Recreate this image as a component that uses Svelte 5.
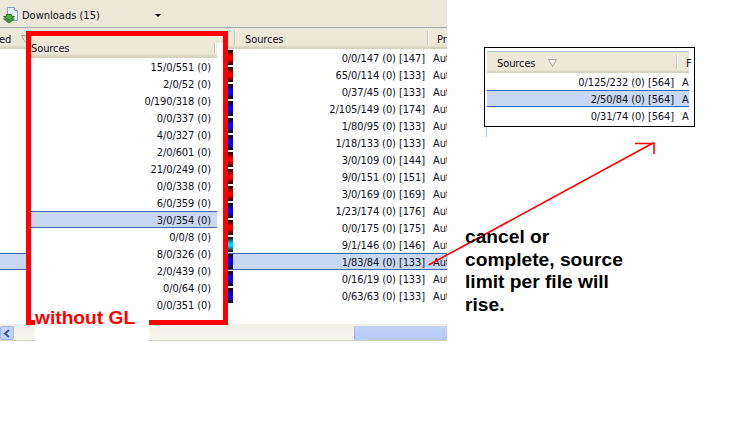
<script>
  const main = [
    ['0/0/147 (0) [147]', 'red'], ['65/0/114 (0) [133]', 'red'], ['0/37/45 (0) [133]', 'blue'],
    ['2/105/149 (0) [174]', 'blue'], ['1/80/95 (0) [133]', 'blue'], ['1/18/133 (0) [133]', 'blue'],
    ['3/0/109 (0) [144]', 'red'], ['9/0/151 (0) [151]', 'red'], ['3/0/169 (0) [169]', 'red'],
    ['1/23/174 (0) [176]', 'blue'], ['0/0/175 (0) [175]', 'red'], ['9/1/146 (0) [146]', 'cyan'],
    ['1/83/84 (0) [133]', 'blue'], ['0/16/19 (0) [133]', 'blue'], ['0/63/63 (0) [133]', 'blue']
  ];
  const left = ['15/0/551 (0)', '2/0/52 (0)', '0/190/318 (0)', '0/0/337 (0)', '4/0/327 (0)', '2/0/601 (0)',
    '21/0/249 (0)', '0/0/338 (0)', '6/0/359 (0)', '3/0/354 (0)', '0/0/8 (0)', '8/0/326 (0)', '2/0/439 (0)',
    '0/0/64 (0)', '0/0/351 (0)'];
  const inset = ['0/125/232 (0) [564]', '2/50/84 (0) [564]', '0/31/74 (0) [564]'];
</script>

<div class="stage">
  <div class="window">
    <div class="toolbar">
      <svg class="dl" width="17" height="17" viewBox="0 0 17 17">
        <path d="M4.500.5h7l3 3v10h-10z" fill="#e6eef8" stroke="#8ea3c2" />
        <path d="M11.500.5v3h3" fill="#fff" stroke="#8ea3c2" />
        <path d="M3.500 7.500h5v2h3l-5.500 3.500L.5 9.500h3z" fill="#53b03f" stroke="#2f7426" />
        <path d="M.5 12l5.500 4 5.500-4-2-.5L6 14 2.500 11.500z" fill="#3f9a30" stroke="#2f7426" stroke-width=".7" />
      </svg>
      <span class="dltext">Downloads (15)</span>
      <span class="caret"></span>
    </div>
    <div class="head">
      <span class="h-ed">ed</span>
      <svg class="sort" width="9" height="8" viewBox="0 0 9 8"><path d="M.5.5h8L4.500 7.500z" fill="#f2f0e6" stroke="#aca899" /></svg>
      <span class="sep s1"></span>
      <span class="h-progress">Progress</span>
      <span class="sep s2"></span>
      <span class="h-sources">Sources</span>
      <span class="sep s3"></span>
      <span class="h-pr">Pr</span>
    </div>
    <div class="rows">
      {#each main as [text, color], i}
        <div class="row" class:sel={i === 12}>
          <span class="bar {color}"></span>
          <span class="val">{text}</span>
          <span class="au">Aut</span>
        </div>
      {/each}
    </div>
    <div class="hscroll">
      <span class="btn"><svg width="8" height="9" viewBox="0 0 8 9"><path d="M6 1L2 4.500 6 8" fill="none" stroke="#3d5a9e" stroke-width="2" /></svg></span>
      <span class="thumb"></span>
    </div>
  </div>

  <div class="frame">
    <div class="patch-head"><span>Sources</span><i></i></div>
    <div class="patch-rows">
      {#each left as text, i}
        <div class="prow" class:sel={i === 9}>{text}</div>
      {/each}
    </div>
  </div>
  <div class="label">without GL</div>

  <div class="inset">
    <div class="inset-head"><span>Sources</span>
      <svg width="9" height="8" viewBox="0 0 9 8"><path d="M.5.5h8L4.500 7.500z" fill="#f2f0e6" stroke="#aca899" /></svg>
      <i></i><span class="f">F</span>
    </div>
    {#each inset as text, i}
      <div class="irow" class:sel={i === 1}><span>{text}</span><span class="a">A</span></div>
    {/each}
  </div>
  <span class="tick"></span>

  <svg class="arrow" width="738" height="424" viewBox="0 0 738 424">
    <path d="M428.500 265L654 142.500M635 143.500H654V154" fill="none" stroke="#f00" stroke-width="1.600" />
  </svg>

  <p class="note">cancel or<br />complete, source<br />limit per file will<br />rise.</p>
</div>

<style>
  :global(body) { margin: 0; background: #fff; }
  .stage {
    position: relative;
    width: 738px;
    height: 424px;
    overflow: hidden;
    background: #fff;
    font: 11px/17px "DejaVu Sans Condensed", "DejaVu Sans", sans-serif;
    font-stretch: condensed;
    letter-spacing: -0.1px;
    color: #101020;
  }
  .window { width: 447px; }
  .toolbar {
    box-sizing: border-box;
    height: 28px;
    background: #ece9d8;
    border-bottom: 1px solid #a3abb0;
    display: flex;
    align-items: center;
    padding: 4px 0 0 3px;
    overflow: hidden;
  }
  .dl { flex: none; margin-right: 2px; }
  .dltext { width: 133px; letter-spacing: 0; }
  .caret { width: 0; height: 0; border: 3px solid transparent; border-top: 3px solid #000; border-bottom: 0; }
  .head {
    position: relative;
    height: 21px;
    box-sizing: border-box;
    background: linear-gradient(#ece9d8 0 17px, #e2dfcd 18px, #d3d0bd 20px);
    line-height: 24px;
  }
  .head span { position: absolute; top: 0; }
  .h-ed { left: -1px; }
  .sort { position: absolute; left: 21px; top: 7px; }
  .h-progress { left: 75px; }
  .h-sources { left: 245px; }
  .h-pr { left: 437px; }
  .head .sep { width: 1px; height: 14px; top: 3px; background: #c9c6b4; box-shadow: 1px 0 #fff; }
  .s1 { left: 65px; }
  .s2 { left: 234px; }
  .s3 { left: 427px; }
  .rows { height: 275px; overflow: hidden; }
  .row {
    box-sizing: border-box;
    height: 17px;
    position: relative;
    line-height: 19px;
  }
  .row.sel {
    background: #c8d8f0;
    border-top: 1px solid #3f68ac;
    border-bottom: 1px solid #3f68ac;
    line-height: 17px;
  }
  .val { position: absolute; right: 22px; white-space: nowrap; }
  .au { position: absolute; left: 433px; }
  .bar { position: absolute; left: 228px; top: 1px; width: 5px; height: 15px; }
  .sel .bar { top: 0; }
  .red { background: linear-gradient(#000, #f00 45%, #e00 60%, #000); }
  .blue { background: linear-gradient(#000, #00f 40%, #00f 65%, #000); }
  .cyan { background: linear-gradient(#000, #0df 45%, #0df 60%, #000); }
  .hscroll {
    height: 17px;
    box-sizing: border-box;
    background: linear-gradient(#f1efe6, #f7f6f1);
    border-bottom: 1px solid #d5d3c7;
    display: flex;
    padding: 2px 0 0;
    justify-content: space-between;
  }
  .btn {
    box-sizing: border-box;
    width: 14px;
    height: 14px;
    border: 1px solid #9fb4e6;
    border-radius: 2px;
    background: #c4d3f7;
    display: flex;
    align-items: center;
    justify-content: center;
  }
  .thumb {
    width: 92px;
    height: 14px;
    background: linear-gradient(#c2d2f8, #b8caf5);
    border-left: 1px solid #9fb4e6;
    border-radius: 2px 0 0 2px;
  }
  .frame {
    position: absolute;
    left: 26px;
    top: 31px;
    width: 192px;
    height: 284px;
    border: 5px solid #f00;
    background: linear-gradient(#ece9d8 0 7px, #fff 7px);
  }
  .patch-head {
    position: absolute;
    left: 0;
    top: 7px;
    width: 186px;
    height: 15px;
    background: linear-gradient(#ece9d8 0 11px, #dedbc9 12px, #d3d0bd);
    line-height: 11px;
  }
  .patch-head i { position: absolute; left: 183px; top: 0; width: 1px; height: 11px; background: #c9c6b4; box-shadow: 1px 0 #fff; }
  .patch-rows { position: absolute; top: 22px; left: 0; width: 186px; }
  .prow { height: 17px; box-sizing: border-box; text-align: right; padding-right: 6px; line-height: 19px; }
  .prow.sel {
    background: #c8d8f0;
    border-top: 1px solid #3f68ac;
    border-bottom: 1px solid #3f68ac;
    line-height: 17px;
  }
  .label {
    position: absolute;
    left: 35px;
    top: 307px;
    width: 114px;
    height: 34px;
    background: linear-gradient(transparent 13px, #fff 13px);
    font: bold 19.200px/22px "Liberation Sans", Arial, sans-serif;
    letter-spacing: 0;
    color: #f00;
    white-space: nowrap;
  }
  .inset {
    position: absolute;
    left: 484px;
    top: 47px;
    box-sizing: border-box;
    width: 211px;
    height: 80px;
    padding-top: 3px;
    border: 1px solid #000;
    background: #fff;
  }
  .inset-head {
    position: relative;
    margin: 0 5px 0 2px;
    height: 22px;
    border-top: 1px solid #a9bcd9;
    box-sizing: border-box;
    background: linear-gradient(#ece9d8 0 18px, #dedbc9 19px, #d3d0bd);
    line-height: 24px;
  }
  .inset-head span { position: absolute; left: 10px; top: 0; }
  .inset-head svg { position: absolute; left: 61px; top: 7px; }
  .inset-head i { position: absolute; left: 189px; top: 3px; width: 1px; height: 14px; background: #c9c6b4; box-shadow: 1px 0 #fff; }
  .inset-head .f { left: 199px; }
  .irow { position: relative; margin: 0 5px 0 2px; height: 17px; box-sizing: border-box; text-align: right; padding-right: 15px; overflow: hidden; line-height: 19px; }
  .irow.sel { background: #c8d8f0; border-top: 1px solid #2f6bc0; border-bottom: 1px solid #2f6bc0; line-height: 17px; }
  .irow .a { position: absolute; left: 195px; }
  .tick { position: absolute; left: 486px; top: 127px; width: 1px; height: 10px; background: #b8c8e8; }
  .arrow { position: absolute; left: 0; top: 0; pointer-events: none; }
  .note {
    position: absolute;
    left: 465px;
    top: 226px;
    margin: 0;
    font: bold 19.200px/22.700px "Liberation Sans", Arial, sans-serif;
    letter-spacing: 0;
    color: #000;
    white-space: nowrap;
  }
</style>
